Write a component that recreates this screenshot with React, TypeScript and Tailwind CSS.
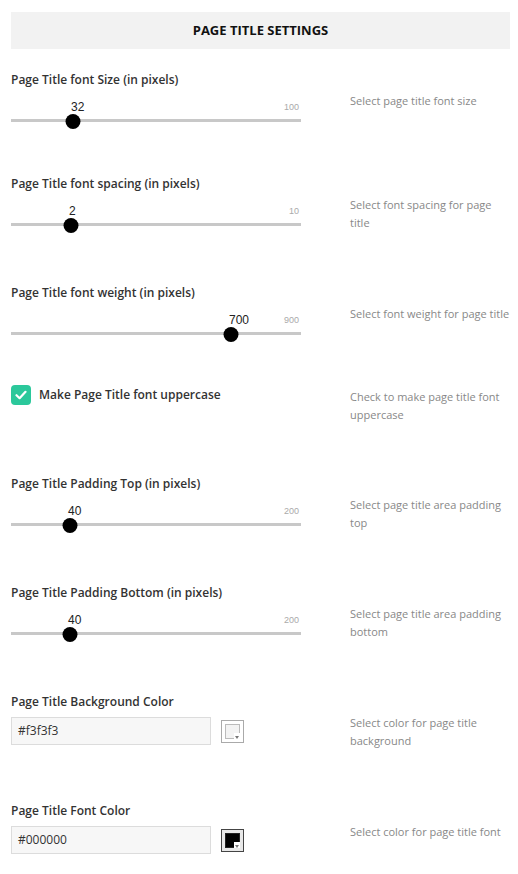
import React from 'react';

type SliderRow = {
  kind: 'slider';
  label: string;
  value: number;
  max: number;
  thumb: number; // thumb centre, px from track start
  desc: string;
  h: string;
};

type CheckRow = { kind: 'check'; label: string; desc: string; h: string };
type ColorRow = { kind: 'color'; label: string; value: string; swatch: string; dark: boolean; desc: string; h: string };

type Row = SliderRow | CheckRow | ColorRow;

const rows: Row[] = [
  { kind: 'slider', label: 'Page Title font Size (in pixels)', value: 32, max: 100, thumb: 62, desc: 'Select page title font size', h: 'h-[104px]' },
  { kind: 'slider', label: 'Page Title font spacing (in pixels)', value: 2, max: 10, thumb: 60, desc: 'Select font spacing for page title', h: 'h-[109px]' },
  { kind: 'slider', label: 'Page Title font weight (in pixels)', value: 700, max: 900, thumb: 220, desc: 'Select font weight for page title', h: 'h-[101px]' },
  { kind: 'check', label: 'Make Page Title font uppercase', desc: 'Check to make page title font uppercase', h: 'h-[90px]' },
  { kind: 'slider', label: 'Page Title Padding Top (in pixels)', value: 40, max: 200, thumb: 59, desc: 'Select page title area padding top', h: 'h-[109px]' },
  { kind: 'slider', label: 'Page Title Padding Bottom (in pixels)', value: 40, max: 200, thumb: 59, desc: 'Select page title area padding bottom', h: 'h-[109px]' },
  { kind: 'color', label: 'Page Title Background Color', value: '#f3f3f3', swatch: '#f3f3f3', dark: false, desc: 'Select color for page title background', h: 'h-[109px]' },
  { kind: 'color', label: 'Page Title Font Color', value: '#000000', swatch: '#000000', dark: true, desc: 'Select color for page title font', h: 'h-[60px]' },
];

const sans = "font-['Open_Sans',sans-serif]";

function Slider({ row }: { row: SliderRow }) {
  return (
    <div>
      <div className="text-[12px] leading-[18px] font-semibold text-[#333]">{row.label}</div>
      <div className="relative mt-[10px] h-[30px] w-[290px]">
        <span
          className="absolute top-[1px] font-['Liberation_Sans',sans-serif] text-[12px] leading-[14px] text-[#222]"
          style={{ left: row.thumb - 2 }}
        >
          {row.value}
        </span>
        <span className="absolute right-[2px] top-[3px] font-['Liberation_Sans',sans-serif] text-[9px] leading-[10px] text-[#aaa]">
          {row.max}
        </span>
        <div className="absolute left-0 right-0 top-[20px] h-[3px] bg-[#c8c8c8]" />
        <div
          className="absolute top-[15px] h-[15px] w-[15px] -translate-x-1/2 rounded-full bg-black"
          style={{ left: row.thumb }}
        />
      </div>
    </div>
  );
}

function Check({ row }: { row: CheckRow }) {
  return (
    <div className="flex items-center">
      <div className="flex h-[20px] w-[20px] items-center justify-center rounded-[4px] bg-[#2bc89b]">
        <svg width="12" height="10" viewBox="0 0 12 10" fill="none">
          <path d="M1.5 5.2 4.6 8.2 10.5 1.8" stroke="white" strokeWidth="2.2" strokeLinecap="round" strokeLinejoin="round" />
        </svg>
      </div>
      <span className="ml-[8px] text-[12px] leading-[18px] font-semibold text-[#333]">{row.label}</span>
    </div>
  );
}

function ColorField({ row }: { row: ColorRow }) {
  return (
    <div>
      <div className="text-[12px] leading-[18px] font-semibold text-[#333]">{row.label}</div>
      <div className="mt-[6px] flex items-center">
        <div className="flex h-[28px] w-[200px] items-center border border-[#dcdcdc] bg-[#f7f7f7] px-[6px] text-[12px] text-[#333]">
          {row.value}
        </div>
        <div
          className={
            'ml-[10px] h-[23px] w-[23px] border p-[3px] ' +
            (row.dark ? 'border-[#444] bg-[#e8e8e8]' : 'border-[#aaa] bg-white')
          }
        >
          <div
            className={'relative h-full w-full border ' + (row.dark ? 'border-[#222]' : 'border-[#bbb]')}
            style={{ backgroundColor: row.swatch }}
          >
            <div className="absolute -bottom-px -right-px flex h-[6px] w-[6px] items-end justify-center bg-white">
              <svg width="4" height="3" viewBox="0 0 4 3">
                <path d="M0 0h4L2 3z" fill="#777" />
              </svg>
            </div>
          </div>
        </div>
      </div>
    </div>
  );
}

export default function App() {
  return (
    <div className={`${sans} min-h-[874px] w-[518px] bg-white pt-[12px]`}>
      <div className="ml-[11px] flex h-[37px] w-[499px] items-center justify-center bg-[#f2f2f2] text-[13px] font-bold text-[#111]">
        PAGE TITLE SETTINGS
      </div>
      <div className="mt-[22px]">
        {rows.map((row) => (
          <div key={row.label} className={`${row.h} flex pl-[11px]`}>
            <div className="w-[290px] shrink-0">
              {row.kind === 'slider' && <Slider row={row} />}
              {row.kind === 'check' && <Check row={row} />}
              {row.kind === 'color' && <ColorField row={row} />}
            </div>
            <div
              className={
                'ml-[49px] w-[163px] text-[11px] leading-[18px] text-[#888] ' +
                (row.kind === 'check' ? 'pt-[3px]' : 'pt-[21px]')
              }
            >
              {row.desc}
            </div>
          </div>
        ))}
      </div>
    </div>
  );
}
